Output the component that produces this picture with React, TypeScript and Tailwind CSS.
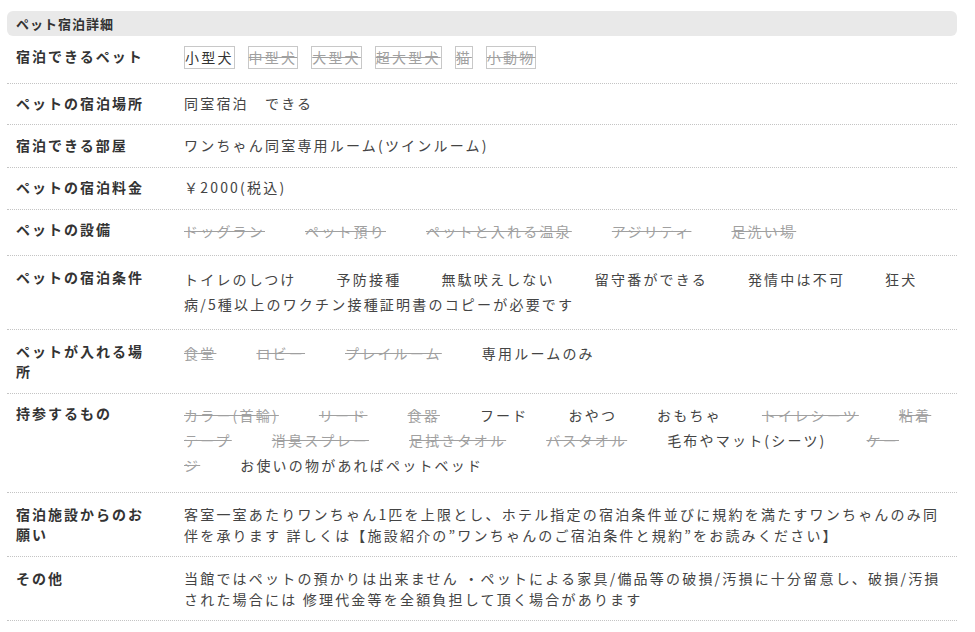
import React, { FC, ReactNode } from "react";

type Item = { text: string; ok: boolean };

// pet sizes shown as boxed tags
const petTypes: Item[] = [
    { text: "小型犬", ok: true },
    { text: "中型犬", ok: false },
    { text: "大型犬", ok: false },
    { text: "超大型犬", ok: false },
    { text: "猫", ok: false },
    { text: "小動物", ok: false },
];

const facilities: Item[] = [
    { text: "ドッグラン", ok: false },
    { text: "ペット預り", ok: false },
    { text: "ペットと入れる温泉", ok: false },
    { text: "アジリティ", ok: false },
    { text: "足洗い場", ok: false },
];

const conditions: Item[] = [
    { text: "トイレのしつけ", ok: true },
    { text: "予防接種", ok: true },
    { text: "無駄吠えしない", ok: true },
    { text: "留守番ができる", ok: true },
    { text: "発情中は不可", ok: true },
    { text: "狂犬病/5種以上のワクチン接種証明書のコピーが必要です", ok: true },
];

const places: Item[] = [
    { text: "食堂", ok: false },
    { text: "ロビー", ok: false },
    { text: "プレイルーム", ok: false },
    { text: "専用ルームのみ", ok: true },
];

const belongings: Item[] = [
    { text: "カラー(首輪)", ok: false },
    { text: "リード", ok: false },
    { text: "食器", ok: false },
    { text: "フード", ok: true },
    { text: "おやつ", ok: true },
    { text: "おもちゃ", ok: true },
    { text: "トイレシーツ", ok: false },
    { text: "粘着テープ", ok: false },
    { text: "消臭スプレー", ok: false },
    { text: "足拭きタオル", ok: false },
    { text: "バスタオル", ok: false },
    { text: "毛布やマット(シーツ)", ok: true },
    { text: "ケージ", ok: false },
    { text: "お使いの物があればペットベッド", ok: true },
];

const Row: FC<{ label: ReactNode; children: ReactNode; pad?: string }> = ({ label, children, pad }) => (
    <div className={`grid grid-cols-[177px_1fr] border-b border-dotted border-[#c4c4c4] ${pad ?? "pt-[9px] pb-[11px]"}`}>
        <div className="pl-[9px] pr-[33px] text-[14px] leading-[20px] font-bold tracking-[2px] text-[#333]">{label}</div>
        <div className="pr-[10px] text-[14px] leading-[21px] tracking-[2.2px] text-[#444]">{children}</div>
    </div>
);

const Inline: FC<{ items: Item[] }> = ({ items }) => (
    <div className="leading-[25px]">
        {items.map((it) => (
            <span key={it.text} className={`mr-10 ${it.ok ? "text-[#444]" : "text-[#a0a0a0] line-through"}`}>
                {it.text}
            </span>
        ))}
    </div>
);

const App: FC = () => {
    return (
        <div className="min-h-screen bg-white font-['Noto_Sans_CJK_JP',sans-serif]">
            <div className="ml-[7px] w-[950px] pt-[11px]">
                <div className="h-[25px] rounded-md bg-[#e9e9e9] pl-[9px] text-[13px] leading-[25px] font-bold tracking-[1px] text-[#333]">
                    ペット宿泊詳細
                </div>

                <Row label="宿泊できるペット" pad="pt-[10px] pb-[14px]">
                    <div className="flex flex-wrap gap-x-[13px]">
                        {petTypes.map((p) => (
                            <span
                                key={p.text}
                                className={`border border-[#c8c8c8] leading-[21px] ${p.ok ? "text-[#333]" : "text-[#a0a0a0] line-through"}`}
                            >
                                {p.text}
                            </span>
                        ))}
                    </div>
                </Row>

                <Row label="ペットの宿泊場所" pad="pt-[9px] pb-[10px]">同室宿泊　できる</Row>
                <Row label="宿泊できる部屋" pad="pt-[10px] pb-[11px]">ワンちゃん同室専用ルーム(ツインルーム)</Row>
                <Row label="ペットの宿泊料金">￥2000(税込)</Row>

                <Row label="ペットの設備">
                    <Inline items={facilities} />
                </Row>

                <Row label="ペットの宿泊条件" pad="pt-[11px] pb-[12px]">
                    <Inline items={conditions} />
                </Row>

                <Row label="ペットが入れる場所" pad="pt-[11px] pb-[12px]">
                    <Inline items={places} />
                </Row>

                <Row label="持参するもの" pad="pt-[9px] pb-[14px]">
                    <Inline items={belongings} />
                </Row>

                <Row label="宿泊施設からのお願い" pad="pt-[11px] pb-[10px]">
                    客室一室あたりワンちゃん1匹を上限とし、ホテル指定の宿泊条件並びに規約を満たすワンちゃんのみ同伴を承ります 詳しくは【施設紹介の”ワンちゃんのご宿泊条件と規約”をお読みください】
                </Row>

                <Row label="その他" pad="pt-[11px] pb-[10px]">
                    当館ではペットの預かりは出来ません ・ペットによる家具/備品等の破損/汚損に十分留意し、破損/汚損された場合には 修理代金等を全額負担して頂く場合があります
                </Row>
            </div>
        </div>
    );
};

export default App;
